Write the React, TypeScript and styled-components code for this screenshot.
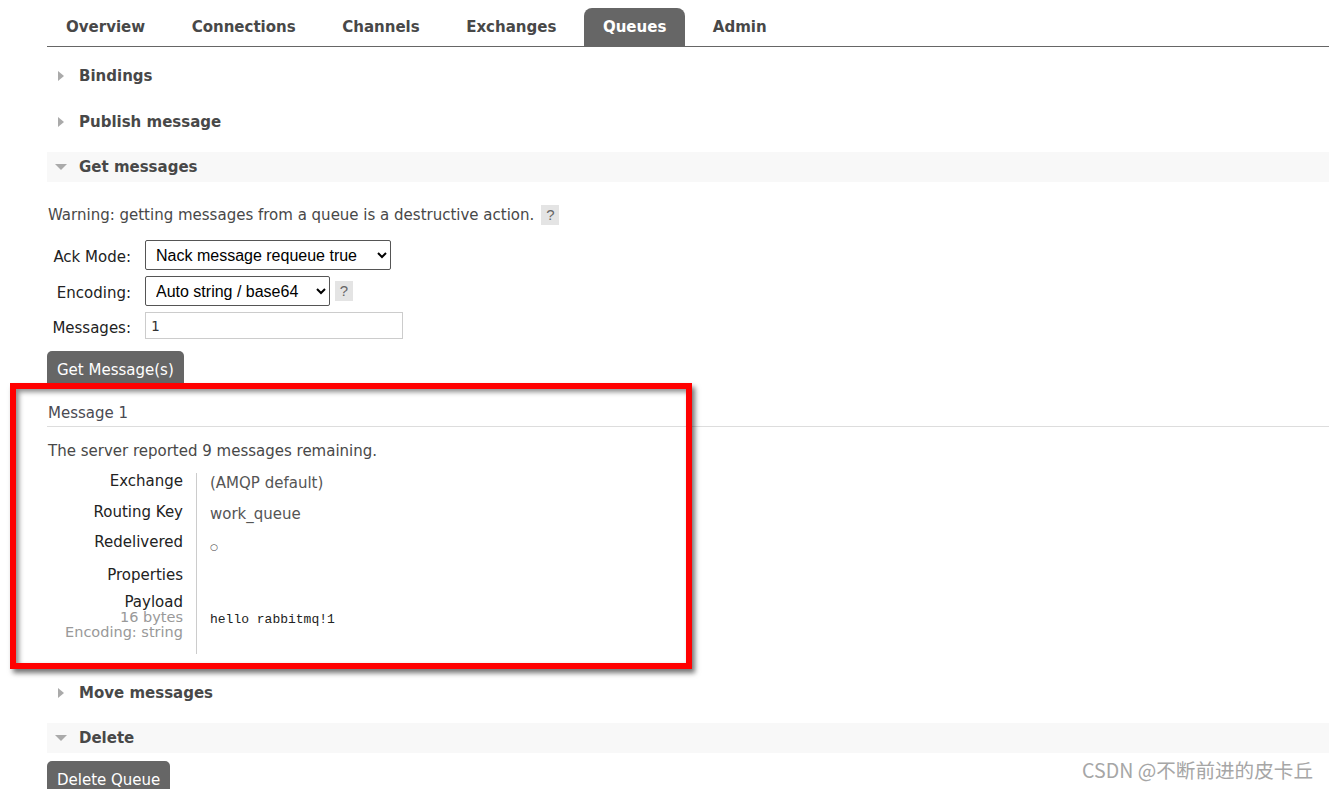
import React from "react";
import styled, { createGlobalStyle } from "styled-components";

const GlobalStyle = createGlobalStyle`
  html, body {
    margin: 0;
    padding: 0;
    background: #fff;
    overflow: hidden;
  }
`;

const Page = styled.div`
  position: relative;
  height: 789px;
  overflow: hidden;
  box-sizing: border-box;
  padding: 8px 0 0 47px;
  font-family: "DejaVu Sans", Verdana, sans-serif;
  font-size: 15px;
  color: #484848;
`;

const TabBar = styled.ul`
  display: flex;
  margin: 0;
  padding: 0;
  list-style: none;
  height: 38px;
  border-bottom: 1px solid #666;
`;

const Tab = styled.li<{ $active?: boolean }>`
  padding: 0 19px;
  margin-right: 8.5px;
  line-height: 37px;
  font-family: "DejaVu Sans Condensed", "DejaVu Sans", sans-serif;
  font-stretch: condensed;
  font-weight: bold;
  font-size: 16.7px;
  border-radius: 8px 8px 0 0;
  background: ${(p) => (p.$active ? "#666" : "transparent")};
  color: ${(p) => (p.$active ? "#fff" : "#484848")};
`;

const SectionHeader = styled.h2<{ $open?: boolean; $mt: number }>`
  display: flex;
  align-items: center;
  gap: 12px;
  height: 30px;
  margin: ${(p) => p.$mt}px 0 0;
  padding-left: 8px;
  background: ${(p) => (p.$open ? "#f8f8f8" : "transparent")};
  font-size: 15px;
  font-weight: bold;
  color: #484848;
`;

const Arrow = styled.span<{ $open?: boolean }>`
  display: flex;
  align-items: center;
  justify-content: center;
  width: 12px;
  height: 12px;
  &::before {
    content: "";
    display: block;
    border-style: solid;
    border-color: transparent;
    ${(p) =>
      p.$open
        ? "border-width: 6px 6px 0 6px; border-top-color: #aaa;"
        : "border-width: 5px 0 5px 6px; border-left-color: #aaa;"}
  }
`;

const Warning = styled.p`
  display: flex;
  align-items: center;
  gap: 7px;
  margin: 23px 0 0 1px;
  height: 20px;
  line-height: 20px;
`;

const Help = styled.span`
  display: inline-block;
  width: 18px;
  height: 20px;
  line-height: 20px;
  text-align: center;
  background: #e4e4e4;
  color: #666;
  font-family: "Liberation Sans", Arial, sans-serif;
  font-size: 15px;
`;

const Form = styled.div`
  display: grid;
  grid-template-columns: 84px auto;
  column-gap: 14px;
  row-gap: 6px;
  margin-top: 15px;
  align-items: center;
`;

const Label = styled.label`
  text-align: right;
  color: #222;
  padding-top: 4px;
`;

const Field = styled.div`
  display: flex;
  align-items: center;
  gap: 5px;
`;

const Select = styled.select<{ $w: number }>`
  width: ${(p) => p.$w}px;
  height: 30px;
  box-sizing: border-box;
  font-family: "Liberation Sans", Arial, sans-serif;
  font-size: 16px;
  color: #000;
  background: #fff;
  border: 1px solid #555;
  border-radius: 2px;
  padding: 0 4px 0 6px;
`;

const TextInput = styled.input`
  width: 258px;
  height: 27px;
  box-sizing: border-box;
  border: 1px solid #ccc;
  padding: 0 5px;
  font-family: "DejaVu Sans Mono", monospace;
  font-size: 14px;
  color: #333;
`;

const Button = styled.button<{ $mt: number }>`
  display: block;
  margin-top: ${(p) => p.$mt}px;
  height: 38px;
  padding: 0 10px;
  border: none;
  border-radius: 5px 5px 0 0;
  background: #666;
  color: #fff;
  font-family: "DejaVu Sans", Verdana, sans-serif;
  font-size: 15px;
`;

const MessageTitle = styled.h3`
  margin: 14px 0 0;
  padding-left: 1px;
  height: 24px;
  line-height: 20px;
  font-size: 15px;
  font-weight: normal;
  color: #4a4a52;
  border-bottom: 1px solid #ddd;
  box-sizing: border-box;
`;

const Remaining = styled.p`
  margin: 14px 0 0 1px;
  line-height: 20px;
`;

const Details = styled.div`
  display: grid;
  grid-template-columns: 150px auto;
  margin-top: 12px;
`;

const Key = styled.div<{ $h: number }>`
  height: ${(p) => p.$h}px;
  padding-right: 13px;
  border-right: 1px solid #ccc;
  text-align: right;
  line-height: 17px;
  color: #222;
`;

const KeyLine = styled.div`
  line-height: 15px;
  padding-top: 1px;
`;

const Sub = styled.div`
  color: #999;
  font-size: 14.5px;
  line-height: 15px;
`;

const Value = styled.div<{ $pt: number; $mono?: boolean }>`
  padding: ${(p) => p.$pt}px 0 0 13px;
  font-size: ${(p) => (p.$mono ? "13px" : "15px")};
  font-family: ${(p) =>
    p.$mono ? '"Liberation Mono", monospace' : '"DejaVu Sans", Verdana, sans-serif'};
  line-height: 17px;
  color: ${(p) => (p.$mono ? "#222" : "#555")};
`;

const Circle = styled.span`
  font-size: 9px;
  color: #444;
`;

const Highlight = styled.div`
  position: absolute;
  left: 10px;
  top: 383px;
  width: 682px;
  height: 286px;
  box-sizing: border-box;
  border: 6px solid #ff0000;
  box-shadow: 3px 4px 5px rgba(0, 0, 0, 0.55),
    inset 3px 3px 5px rgba(0, 0, 0, 0.45);
  pointer-events: none;
`;

const Watermark = styled.div`
  position: absolute;
  left: 1082px;
  top: 757px;
  font-family: "Noto Sans CJK SC", "Noto Sans", sans-serif;
  font-size: 19.6px;
  line-height: 26px;
  color: #a6a6a6;
  white-space: nowrap;
`;

const tabs = ["Overview", "Connections", "Channels", "Exchanges", "Queues", "Admin"];

export default function App() {
  return (
    <Page>
      <GlobalStyle />
      <TabBar>
        {tabs.map((t) => (
          <Tab key={t} $active={t === "Queues"}>
            {t}
          </Tab>
        ))}
      </TabBar>

      <SectionHeader $mt={14}>
        <Arrow />
        Bindings
      </SectionHeader>
      <SectionHeader $mt={16}>
        <Arrow />
        Publish message
      </SectionHeader>
      <SectionHeader $mt={15} $open>
        <Arrow $open />
        Get messages
      </SectionHeader>

      <Warning>
        Warning: getting messages from a queue is a destructive action.
        <Help>?</Help>
      </Warning>

      <Form>
        <Label>Ack Mode:</Label>
        <Field>
          <Select $w={246} defaultValue="nack">
            <option value="nack">Nack message requeue true</option>
          </Select>
        </Field>
        <Label>Encoding:</Label>
        <Field>
          <Select $w={185} defaultValue="auto">
            <option value="auto">Auto string / base64</option>
          </Select>
          <Help>?</Help>
        </Field>
        <Label>Messages:</Label>
        <Field>
          <TextInput defaultValue="1" />
        </Field>
      </Form>

      <Button $mt={12}>Get Message(s)</Button>

      <MessageTitle>Message 1</MessageTitle>
      <Remaining>The server reported 9 messages remaining.</Remaining>

      <Details>
        <Key $h={31}>Exchange</Key>
        <Value $pt={2}>(AMQP default)</Value>
        <Key $h={30}>Routing Key</Key>
        <Value $pt={2}>work_queue</Value>
        <Key $h={33}>Redelivered</Key>
        <Value $pt={3}>
          <Circle>○</Circle>
        </Value>
        <Key $h={27}>Properties</Key>
        <Value $pt={0} />
        <Key $h={60}>
          <KeyLine>Payload</KeyLine>
          <Sub>16 bytes</Sub>
          <Sub>Encoding: string</Sub>
        </Key>
        <Value $pt={17} $mono>
          hello rabbitmq!1
        </Value>
      </Details>

      <SectionHeader $mt={24}>
        <Arrow />
        Move messages
      </SectionHeader>
      <SectionHeader $mt={15} $open>
        <Arrow $open />
        Delete
      </SectionHeader>
      <Button $mt={8}>Delete Queue</Button>

      <Highlight />
      <Watermark>CSDN @不断前进的皮卡丘</Watermark>
    </Page>
  );
}
